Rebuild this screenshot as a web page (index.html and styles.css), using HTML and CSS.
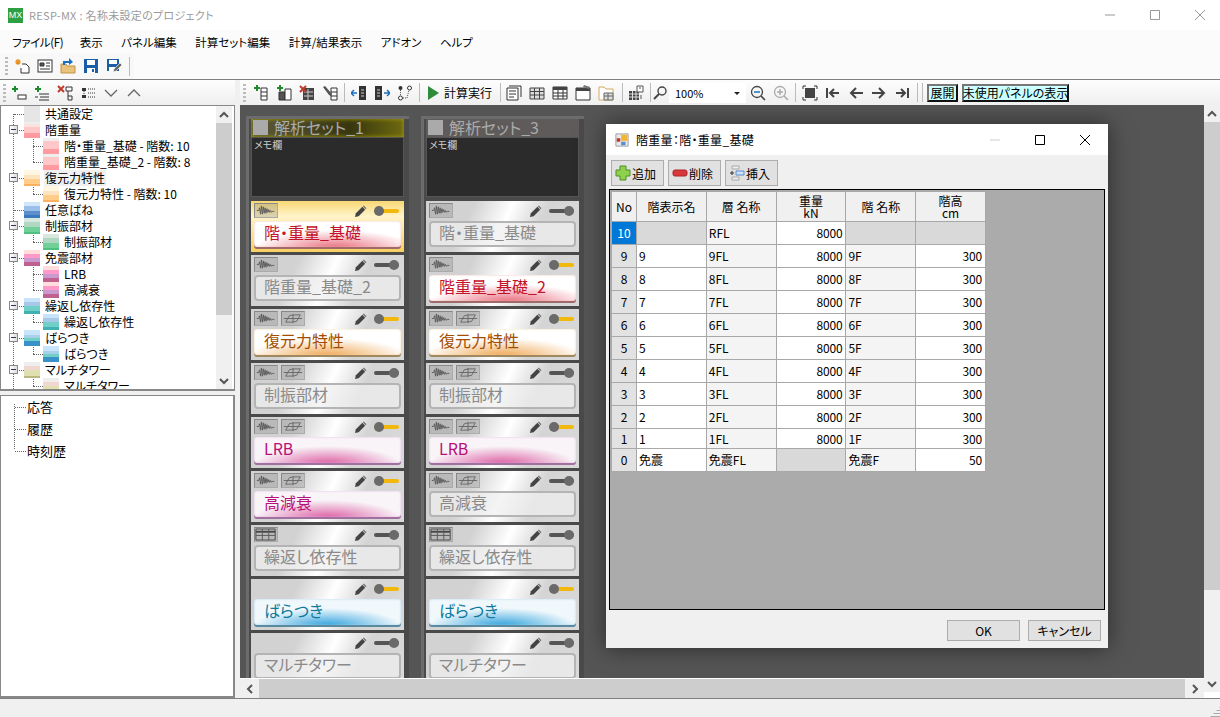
FILE: index.html
```html
<!DOCTYPE html>
<html lang="ja">
<head>
  <meta charset="UTF-8" />
  <title>RESP-MX</title>
  <link rel="stylesheet" href="styles.css">
</head>
<body>

<svg class="defs" width="0" height="0">
  <symbol id="i-new" viewBox="0 0 16 16"><path d="M4 1v6M1 4h6M2 2l4 4M6 2L2 6" stroke="#e8901c" stroke-width="1.2"/><path d="M8 6h4l3 3v6H7v-5" fill="#fff" stroke="#333"/></symbol>
  <symbol id="i-form" viewBox="0 0 16 16"><rect x="1" y="2" width="14" height="12" fill="#fff" stroke="#333"/><path d="M3 5h4v3H3zM9 5h4M9 8h4M3 11h10" fill="#555" stroke="#333"/></symbol>
  <symbol id="i-open" viewBox="0 0 16 16"><path d="M1 6h5l1 2h8v7H1z" fill="#e9c27e" stroke="#c49245"/><path d="M4 7V4h6" fill="none" stroke="#1c6fc0" stroke-width="2"/><path d="M9 0l4 4-4 3z" fill="#1c6fc0"/></symbol>
  <symbol id="i-save" viewBox="0 0 16 16"><path d="M1 1h14v14H1z" fill="#1b5da6"/><path d="M4 2h8v5H4z" fill="#fff"/><path d="M4 10h8v5H4z" fill="#fff"/><path d="M9 11h2v3H9z" fill="#1b5da6"/></symbol>
  <symbol id="i-saveas" viewBox="0 0 16 16"><path d="M1 1h12v12H1z" fill="#1b5da6"/><path d="M3 2h8v4H3zM3 9h6v4H3z" fill="#fff"/><path d="M7 14l1-3 6-6 2 2-6 6z" fill="#666" stroke="#fff" stroke-width=".6"/></symbol>
  <symbol id="i-addnode" viewBox="0 0 16 16"><path d="M4 1v6M1 4h6" stroke="#1f8a2c" stroke-width="2"/><rect x="7" y="10" width="8" height="4" fill="#fff" stroke="#333"/></symbol>
  <symbol id="i-addchild" viewBox="0 0 16 16"><path d="M4 1v6M1 4h6" stroke="#1f8a2c" stroke-width="2"/><path d="M5 9h10M1 12h3M6 12h9M5 15h10" stroke="#333"/></symbol>
  <symbol id="i-delnode" viewBox="0 0 16 16"><path d="M1 1l6 6M7 1L1 7" stroke="#c0392b" stroke-width="2"/><path d="M9 2h6v4H9zM11 6v9h4v-4h-4" fill="none" stroke="#333"/></symbol>
  <symbol id="i-dots" viewBox="0 0 16 16"><path d="M2 3h4v3H2zM2 10h4v3H2z" fill="#333"/><path d="M4 6v4M8 4h7M8 8h7M8 12h7" stroke="#333" stroke-dasharray="1 1"/></symbol>
  <symbol id="i-down" viewBox="0 0 16 16"><path d="M2 5l6 6 6-6" fill="none" stroke="#666" stroke-width="1.3"/></symbol>
  <symbol id="i-up" viewBox="0 0 16 16"><path d="M2 11l6-6 6 6" fill="none" stroke="#666" stroke-width="1.3"/></symbol>
  <symbol id="i-addcol" viewBox="0 0 16 16"><path d="M4 0v6M1 3h6" stroke="#1f8a2c" stroke-width="2"/><path d="M8 3h6v12H8zM8 7h6M8 11h6" fill="#fff" stroke="#333"/></symbol>
  <symbol id="i-copycol" viewBox="0 0 16 16"><path d="M4 0v6M1 3h6" stroke="#1f8a2c" stroke-width="2"/><path d="M3 7h6v8H3z" fill="#555" stroke="#333"/><path d="M9 4h6v11H9z" fill="#fff" stroke="#333"/></symbol>
  <symbol id="i-delcol" viewBox="0 0 16 16"><path d="M4 3h11v12H4z" fill="#444"/><path d="M5 7h9M5 11h9M9 4v11" stroke="#ccc"/><path d="M1 1l6 6M7 1L1 7" stroke="#c0392b" stroke-width="2"/></symbol>
  <symbol id="i-editcol" viewBox="0 0 16 16"><path d="M9 3h6v12H9zM9 7h6M9 11h6" fill="#fff" stroke="#333"/><path d="M1 2l2-1 7 8-1 2-2-1z" fill="#555"/></symbol>
  <symbol id="i-moveleft" viewBox="0 0 16 16"><path d="M8 1h7v14H8z" fill="#333"/><path d="M10 5h3M10 8h3M10 11h3" stroke="#ccc"/><path d="M0 8h6M3 5L0 8l3 3" fill="none" stroke="#1c6fc0" stroke-width="1.5"/></symbol>
  <symbol id="i-moveright" viewBox="0 0 16 16"><path d="M1 1h7v14H1z" fill="#333"/><path d="M3 5h3M3 8h3M3 11h3" stroke="#ccc"/><path d="M10 8h6M13 5l3 3-3 3" fill="none" stroke="#1c6fc0" stroke-width="1.5"/></symbol>
  <symbol id="i-link" viewBox="0 0 16 16"><circle cx="3.500" cy="3" r="2" fill="#333"/><circle cx="12.500" cy="3" r="2" fill="#fff" stroke="#333"/><circle cx="3.500" cy="13" r="2" fill="#fff" stroke="#333"/><path d="M3.500 5v6M6 13h4l2-8" fill="none" stroke="#555" stroke-dasharray="1 1"/></symbol>
  <symbol id="i-play" viewBox="0 0 16 16"><path d="M3 1l11 7-11 7z" fill="#2e8b3a"/></symbol>
  <symbol id="i-panel" viewBox="0 0 16 16"><path d="M3 1h12v11" fill="none" stroke="#333"/><path d="M1 3h11v12H1z" fill="#fff" stroke="#333"/><path d="M3 6h7M3 9h7M3 12h5" stroke="#333"/></symbol>
  <symbol id="i-table" viewBox="0 0 16 16"><path d="M1 3h14v11H1z" fill="#ddd" stroke="#444"/><path d="M1 6.500h14M1 10h14M5.500 3v11M10.500 3v11" stroke="#444"/></symbol>
  <symbol id="i-table2" viewBox="0 0 16 16"><path d="M1 2h14v12H1z" fill="#fff" stroke="#333"/><path d="M1 2h14v3H1z" fill="#444"/><path d="M1 8h14M1 11h14M6 5v9M11 5v9" stroke="#333"/></symbol>
  <symbol id="i-window" viewBox="0 0 16 16"><path d="M1 3h14v12H1z" fill="#fff" stroke="#333"/><path d="M1 3h14v3H1z" fill="#444"/><path d="M9 0l6 2-1 2-6-2z" fill="#777"/></symbol>
  <symbol id="i-folder" viewBox="0 0 16 16"><path d="M1 2h5l2 2h7v11H1z" fill="#fff" stroke="#d8a860"/><path d="M6 8h9v7H6zM6 11h9M10 8v7" fill="#ddd" stroke="#666"/></symbol>
  <symbol id="i-calc" viewBox="0 0 16 16"><path d="M1 6h10v9H1z" fill="#444"/><path d="M1 9h10M1 12h10M4.500 6v9M8 6v9" stroke="#ddd"/><path d="M9 1h6v6H9z" fill="#fff" stroke="#555"/><path d="M11 3h2M13 10v4" stroke="#555"/></symbol>
  <symbol id="i-zoomsel" viewBox="0 0 16 16"><circle cx="10" cy="6" r="4" fill="none" stroke="#444" stroke-width="1.4"/><path d="M7 9l-5 5" stroke="#444" stroke-width="2"/></symbol>
  <symbol id="i-zoomout" viewBox="0 0 16 16"><circle cx="7" cy="7" r="5.500" fill="none" stroke="#444" stroke-width="1.3"/><path d="M11 11l4 4" stroke="#444" stroke-width="1.6"/><path d="M4 7h6" stroke="#1c6fc0" stroke-width="1.5"/></symbol>
  <symbol id="i-zoomin" viewBox="0 0 16 16"><circle cx="7" cy="7" r="5.500" fill="none" stroke="#aaa" stroke-width="1.3"/><path d="M11 11l4 4" stroke="#aaa" stroke-width="1.6"/><path d="M4 7h6M7 4v6" stroke="#aaa" stroke-width="1.5"/></symbol>
  <symbol id="i-fit" viewBox="0 0 16 16"><rect x="3" y="3" width="10" height="10" fill="#444"/><path d="M1 4V1h3M12 1h3v3M15 12v3h-3M4 15H1v-3" fill="none" stroke="#333"/></symbol>
  <symbol id="i-first" viewBox="0 0 16 16"><path d="M2 3v10" stroke="#444" stroke-width="2"/><path d="M14 8H5M9 4L5 8l4 4" fill="none" stroke="#444" stroke-width="2"/></symbol>
  <symbol id="i-prev" viewBox="0 0 16 16"><path d="M15 8H3M8 3L3 8l5 5" fill="none" stroke="#444" stroke-width="2"/></symbol>
  <symbol id="i-next" viewBox="0 0 16 16"><path d="M1 8h12M8 3l5 5-5 5" fill="none" stroke="#444" stroke-width="2"/></symbol>
  <symbol id="i-last" viewBox="0 0 16 16"><path d="M14 3v10" stroke="#444" stroke-width="2"/><path d="M2 8h9M7 4l4 4-4 4" fill="none" stroke="#444" stroke-width="2"/></symbol>
  <symbol id="i-wave" viewBox="0 0 24 14"><path d="M2 7h2l1-3 1 7 1-9 1 9 1-8 1 7 1-6 1 6 1-5 1 4 1-3 1 3 1-2 1 2 1-1h2" fill="none" stroke="#5a5a5a"/></symbol>
  <symbol id="i-hyst" viewBox="0 0 24 14"><path d="M4 11l4-7c3-1 8-1 12-1l-4 7c-3 1-8 1-12 1zM2 7h20M12 2v10" fill="none" stroke="#666"/></symbol>
  <symbol id="i-grid" viewBox="0 0 24 14"><path d="M1 1h21v12H1z" fill="none" stroke="#444"/><path d="M1 4h21" stroke="#444" stroke-width="2"/><path d="M1 8h21M8 1v12M15 1v12" stroke="#555"/></symbol>
  <symbol id="i-pencil" viewBox="0 0 14 14"><path d="M1 13l1-4 7-7 3 3-7 7z" fill="#444"/><path d="M10 1l3 3" stroke="#777" stroke-width="1.5"/></symbol>
  <symbol id="i-appdlg" viewBox="0 0 16 16"><path d="M1 1h14v14H1z" fill="#e8e8e8" stroke="#999"/><path d="M7 2h7v7H7z" fill="#f2b632"/><path d="M2 6h4v4H2z" fill="#c0392b"/><path d="M7 10h5v4H7z" fill="#5b8bd0"/></symbol>
  <symbol id="i-plus" viewBox="0 0 16 16"><path d="M5 1h6v4h4v6h-4v4H5v-4H1V5h4z" fill="#8fd14f" stroke="#4d8f22"/></symbol>
  <symbol id="i-minus" viewBox="0 0 16 16"><rect x="1" y="5" width="14" height="6" rx="2" fill="#d8383a" stroke="#a82426"/></symbol>
  <symbol id="i-insert" viewBox="0 0 16 16"><path d="M3 1h7v3H3zM3 12h7v3H3z" fill="#eee" stroke="#aaa"/><path d="M7 6h8v4H7z" fill="#cfe0fa" stroke="#5b8bd0"/><path d="M1 8h4M3 6v4" stroke="#333"/></symbol>
  <symbol id="i-chev-up" viewBox="0 0 10 10"><path d="M1 7l4-4 4 4" fill="none" stroke="#555" stroke-width="2"/></symbol>
  <symbol id="i-chev-down" viewBox="0 0 10 10"><path d="M1 3l4 4 4-4" fill="none" stroke="#555" stroke-width="2"/></symbol>
  <symbol id="i-chev-left" viewBox="0 0 10 10"><path d="M7 1L3 5l4 4" fill="none" stroke="#555" stroke-width="2"/></symbol>
  <symbol id="i-chev-right" viewBox="0 0 10 10"><path d="M3 1l4 4-4 4" fill="none" stroke="#555" stroke-width="2"/></symbol>
</svg>

<div class="titlebar">
  <span class="applogo">MX</span>
  <span class="apptitle">RESP-MX : 名称未設定のプロジェクト</span>
  <span class="wbtns">
    <svg class="wb" viewBox="0 0 10 10"><path d="M0 5h10" stroke="#999"/></svg>
    <svg class="wb" viewBox="0 0 10 10"><path d="M.5.5h9v9h-9z" fill="none" stroke="#999"/></svg>
    <svg class="wb" viewBox="0 0 10 10"><path d="M0 0l10 10M10 0L0 10" stroke="#999"/></svg>
  </span>
</div>

<div class="menubar">
  <span>ファイル(F)</span><span>表示</span><span>パネル編集</span><span>計算セット編集</span><span>計算/結果表示</span><span>アドオン</span><span>ヘルプ</span>
</div>

<div class="filebar">
  <div class="filetools">
    <i class="grip"></i>
    <span class="tb"><svg><use href="#i-new"/></svg></span>
    <span class="tb"><svg><use href="#i-form"/></svg></span>
    <span class="tb"><svg><use href="#i-open"/></svg></span>
    <span class="tb"><svg><use href="#i-save"/></svg></span>
    <span class="tb"><svg><use href="#i-saveas"/></svg></span>
    <i class="sep"></i>
  </div>
</div>

<div class="work">
  <div class="left">
    <div class="toolbar lefttools">
      <i class="grip"></i>
      <span class="tb"><svg><use href="#i-addnode"/></svg></span>
      <span class="tb"><svg><use href="#i-addchild"/></svg></span>
      <span class="tb"><svg><use href="#i-delnode"/></svg></span>
      <span class="tb"><svg><use href="#i-dots"/></svg></span>
      <span class="tb"><svg><use href="#i-down"/></svg></span>
      <span class="tb"><svg><use href="#i-up"/></svg></span>
    </div>

    <div class="treebox">
      <div class="tree">
        <div class="node"><i class="sw gray"></i>共通設定</div>
        <div class="node"><b class="exp"></b><i class="sw pink"></i>階重量</div>
        <div class="node sub"><i class="sw pink2"></i>階・重量_基礎 - 階数: 10</div>
        <div class="node sub"><i class="sw pink2"></i>階重量_基礎_2 - 階数: 8</div>
        <div class="node"><b class="exp"></b><i class="sw orange"></i><span class="hilite">復元力特性</span></div>
        <div class="node sub"><i class="sw orange"></i>復元力特性 - 階数: 10</div>
        <div class="node"><i class="sw blue"></i>任意ばね</div>
        <div class="node"><b class="exp"></b><i class="sw green"></i>制振部材</div>
        <div class="node sub"><i class="sw green"></i>制振部材</div>
        <div class="node"><b class="exp"></b><i class="sw magenta"></i>免震部材</div>
        <div class="node sub"><i class="sw magenta"></i>LRB</div>
        <div class="node sub"><i class="sw magenta"></i>高減衰</div>
        <div class="node"><b class="exp"></b><i class="sw teal"></i>繰返し依存性</div>
        <div class="node sub"><i class="sw teal"></i>繰返し依存性</div>
        <div class="node"><b class="exp"></b><i class="sw sky"></i>ばらつき</div>
        <div class="node sub"><i class="sw sky"></i>ばらつき</div>
        <div class="node"><b class="exp"></b><i class="sw khaki"></i>マルチタワー</div>
        <div class="node sub"><i class="sw khaki"></i>マルチタワー</div>
      </div>
      <div class="vscroll small">
        <span class="sbtn"><svg><use href="#i-chev-up"/></svg></span>
        <span class="thumb"></span>
        <span class="sbtn end"><svg><use href="#i-chev-down"/></svg></span>
      </div>
    </div>

    <div class="resultbox">
      <div class="res">応答</div>
      <div class="res">履歴</div>
      <div class="res">時刻歴</div>
    </div>
  </div>

  <div class="right">
    <div class="toolbar maintools">
      <i class="grip"></i>
      <span class="tb"><svg><use href="#i-addcol"/></svg></span>
      <span class="tb"><svg><use href="#i-copycol"/></svg></span>
      <span class="tb"><svg><use href="#i-delcol"/></svg></span>
      <span class="tb"><svg><use href="#i-editcol"/></svg></span>
      <i class="sep s32"></i>
      <span class="tb"><svg><use href="#i-moveleft"/></svg></span>
      <span class="tb"><svg><use href="#i-moveright"/></svg></span>
      <span class="tb"><svg><use href="#i-link"/></svg></span>
      <i class="sep s31"></i>
      <span class="tb"><svg><use href="#i-play"/></svg></span>
      <span class="runlabel">計算実行</span>
      <i class="sep s81"></i>
      <span class="tb"><svg><use href="#i-panel"/></svg></span>
      <span class="tb"><svg><use href="#i-table"/></svg></span>
      <span class="tb"><svg><use href="#i-table2"/></svg></span>
      <span class="tb"><svg><use href="#i-window"/></svg></span>
      <span class="tb"><svg><use href="#i-folder"/></svg></span>
      <i class="sep s51"></i>
      <span class="tb"><svg><use href="#i-calc"/></svg></span>
      <i class="sep s30"></i>
      <span class="tb narrow"><svg><use href="#i-zoomsel"/></svg></span>
      <span class="combo">100%<i class="caret"></i></span>
      <span class="tb"><svg><use href="#i-zoomout"/></svg></span>
      <span class="tb"><svg><use href="#i-zoomin"/></svg></span>
      <i class="sep s32"></i>
      <span class="tb"><svg><use href="#i-fit"/></svg></span>
      <span class="tb"><svg><use href="#i-first"/></svg></span>
      <span class="tb"><svg><use href="#i-prev"/></svg></span>
      <span class="tb"><svg><use href="#i-next"/></svg></span>
      <span class="tb"><svg><use href="#i-last"/></svg></span>
      <i class="sep s44"></i>
      <i class="sep s04"></i>
      <span class="cyanbtn">展開</span>
      <span class="cyanbtn wide">未使用パネルの表示</span>
    </div>

    <div class="mainrow">
      <div class="mainleft">
        <div class="canvas">
          <section class="setcol">
            <div class="sethead on"><i class="chk"></i>解析セット_1</div>
            <div class="memo">メモ欄</div>
            <div class="card selected">
              <div class="cardtop"><svg class="ci"><use href="#i-wave"/></svg><span class="tools"><svg class="pen"><use href="#i-pencil"/></svg><i class="toggle on"></i></span></div>
              <div class="lbl red">階・重量_基礎</div>
            </div>
            <div class="card">
              <div class="cardtop"><svg class="ci"><use href="#i-wave"/></svg><span class="tools"><svg class="pen"><use href="#i-pencil"/></svg><i class="toggle"></i></span></div>
              <div class="lbl">階重量_基礎_2</div>
            </div>
            <div class="card">
              <div class="cardtop"><svg class="ci"><use href="#i-wave"/></svg><svg class="ci"><use href="#i-hyst"/></svg><span class="tools"><svg class="pen"><use href="#i-pencil"/></svg><i class="toggle on"></i></span></div>
              <div class="lbl orange">復元力特性</div>
            </div>
            <div class="card">
              <div class="cardtop"><svg class="ci"><use href="#i-wave"/></svg><svg class="ci"><use href="#i-hyst"/></svg><span class="tools"><svg class="pen"><use href="#i-pencil"/></svg><i class="toggle"></i></span></div>
              <div class="lbl">制振部材</div>
            </div>
            <div class="card">
              <div class="cardtop"><svg class="ci"><use href="#i-wave"/></svg><svg class="ci"><use href="#i-hyst"/></svg><span class="tools"><svg class="pen"><use href="#i-pencil"/></svg><i class="toggle on"></i></span></div>
              <div class="lbl magenta">LRB</div>
            </div>
            <div class="card">
              <div class="cardtop"><svg class="ci"><use href="#i-wave"/></svg><svg class="ci"><use href="#i-hyst"/></svg><span class="tools"><svg class="pen"><use href="#i-pencil"/></svg><i class="toggle on"></i></span></div>
              <div class="lbl magenta">高減衰</div>
            </div>
            <div class="card">
              <div class="cardtop"><svg class="ci"><use href="#i-grid"/></svg><span class="tools"><svg class="pen"><use href="#i-pencil"/></svg><i class="toggle"></i></span></div>
              <div class="lbl">繰返し依存性</div>
            </div>
            <div class="card">
              <div class="cardtop"><span class="tools"><svg class="pen"><use href="#i-pencil"/></svg><i class="toggle on"></i></span></div>
              <div class="lbl sky">ばらつき</div>
            </div>
            <div class="card">
              <div class="cardtop"><span class="tools"><svg class="pen"><use href="#i-pencil"/></svg><i class="toggle"></i></span></div>
              <div class="lbl">マルチタワー</div>
            </div>
          </section>

          <section class="setcol">
            <div class="sethead"><i class="chk"></i>解析セット_3</div>
            <div class="memo">メモ欄</div>
            <div class="card">
              <div class="cardtop"><svg class="ci"><use href="#i-wave"/></svg><span class="tools"><svg class="pen"><use href="#i-pencil"/></svg><i class="toggle"></i></span></div>
              <div class="lbl">階・重量_基礎</div>
            </div>
            <div class="card">
              <div class="cardtop"><svg class="ci"><use href="#i-wave"/></svg><span class="tools"><svg class="pen"><use href="#i-pencil"/></svg><i class="toggle on"></i></span></div>
              <div class="lbl red">階重量_基礎_2</div>
            </div>
            <div class="card">
              <div class="cardtop"><svg class="ci"><use href="#i-wave"/></svg><svg class="ci"><use href="#i-hyst"/></svg><span class="tools"><svg class="pen"><use href="#i-pencil"/></svg><i class="toggle on"></i></span></div>
              <div class="lbl orange">復元力特性</div>
            </div>
            <div class="card">
              <div class="cardtop"><svg class="ci"><use href="#i-wave"/></svg><svg class="ci"><use href="#i-hyst"/></svg><span class="tools"><svg class="pen"><use href="#i-pencil"/></svg><i class="toggle"></i></span></div>
              <div class="lbl">制振部材</div>
            </div>
            <div class="card">
              <div class="cardtop"><svg class="ci"><use href="#i-wave"/></svg><svg class="ci"><use href="#i-hyst"/></svg><span class="tools"><svg class="pen"><use href="#i-pencil"/></svg><i class="toggle on"></i></span></div>
              <div class="lbl magenta">LRB</div>
            </div>
            <div class="card">
              <div class="cardtop"><svg class="ci"><use href="#i-wave"/></svg><svg class="ci"><use href="#i-hyst"/></svg><span class="tools"><svg class="pen"><use href="#i-pencil"/></svg><i class="toggle"></i></span></div>
              <div class="lbl">高減衰</div>
            </div>
            <div class="card">
              <div class="cardtop"><svg class="ci"><use href="#i-grid"/></svg><span class="tools"><svg class="pen"><use href="#i-pencil"/></svg><i class="toggle"></i></span></div>
              <div class="lbl">繰返し依存性</div>
            </div>
            <div class="card">
              <div class="cardtop"><span class="tools"><svg class="pen"><use href="#i-pencil"/></svg><i class="toggle on"></i></span></div>
              <div class="lbl sky">ばらつき</div>
            </div>
            <div class="card">
              <div class="cardtop"><span class="tools"><svg class="pen"><use href="#i-pencil"/></svg><i class="toggle"></i></span></div>
              <div class="lbl">マルチタワー</div>
            </div>
          </section>

          <div class="dialog">
            <div class="dlgtitle">
              <svg class="dlgicon"><use href="#i-appdlg"/></svg>
              <span class="dlgname">階重量：階・重量_基礎</span>
              <span class="dlgbtns">
                <svg class="wb" viewBox="0 0 10 10"><path d="M0 5h10" stroke="#ccc"/></svg>
                <svg class="wb" viewBox="0 0 10 10"><path d="M.5.5h9v9h-9z" fill="none" stroke="#000"/></svg>
                <svg class="wb" viewBox="0 0 10 10"><path d="M0 0l10 10M10 0L0 10" stroke="#000"/></svg>
              </span>
            </div>
            <div class="dlgtools">
              <span class="dbtn"><svg><use href="#i-plus"/></svg>追加</span>
              <span class="dbtn"><svg><use href="#i-minus"/></svg>削除</span>
              <span class="dbtn"><svg><use href="#i-insert"/></svg>挿入</span>
            </div>
            <div class="gridwrap">
              <table class="grid">
                <thead>
                  <tr><th>No</th><th>階表示名</th><th>層 名称</th><th>重量<br>kN</th><th>階 名称</th><th>階高<br>cm</th></tr>
                </thead>
                <tbody>
                  <tr><td class="rh cur">10</td><td class="off"></td><td class="alt">RFL</td><td class="num">8000</td><td class="off"></td><td class="off"></td></tr>
                  <tr><td class="rh">9</td><td>9</td><td class="alt">9FL</td><td class="num">8000</td><td class="alt">9F</td><td class="num">300</td></tr>
                  <tr><td class="rh">8</td><td>8</td><td class="alt">8FL</td><td class="num">8000</td><td class="alt">8F</td><td class="num">300</td></tr>
                  <tr><td class="rh">7</td><td>7</td><td class="alt">7FL</td><td class="num">8000</td><td class="alt">7F</td><td class="num">300</td></tr>
                  <tr><td class="rh">6</td><td>6</td><td class="alt">6FL</td><td class="num">8000</td><td class="alt">6F</td><td class="num">300</td></tr>
                  <tr><td class="rh">5</td><td>5</td><td class="alt">5FL</td><td class="num">8000</td><td class="alt">5F</td><td class="num">300</td></tr>
                  <tr><td class="rh">4</td><td>4</td><td class="alt">4FL</td><td class="num">8000</td><td class="alt">4F</td><td class="num">300</td></tr>
                  <tr><td class="rh">3</td><td>3</td><td class="alt">3FL</td><td class="num">8000</td><td class="alt">3F</td><td class="num">300</td></tr>
                  <tr><td class="rh">2</td><td>2</td><td class="alt">2FL</td><td class="num">8000</td><td class="alt">2F</td><td class="num">300</td></tr>
                  <tr class="short"><td class="rh">1</td><td>1</td><td class="alt">1FL</td><td class="num">8000</td><td class="alt">1F</td><td class="num">300</td></tr>
                  <tr><td class="rh">0</td><td>免震</td><td class="alt">免震FL</td><td class="off"></td><td class="alt">免震F</td><td class="num">50</td></tr>
                </tbody>
              </table>
            </div>
            <div class="dlgfoot">
              <span class="okbtn">OK</span>
              <span class="okbtn">キャンセル</span>
            </div>
          </div>
        </div>
        <div class="hscroll">
          <span class="sbtn"><svg><use href="#i-chev-left"/></svg></span>
          <span class="thumb"></span>
          <span class="sbtn"><svg><use href="#i-chev-right"/></svg></span>
        </div>
      </div>
      <div class="vscroll main">
        <span class="sbtn"><svg><use href="#i-chev-up"/></svg></span>
        <span class="thumb"></span>
        <span class="sbtn end"><svg><use href="#i-chev-down"/></svg></span>
      </div>
    </div>
  </div>
</div>

<div class="statusbar"></div>

</body>
</html>
```

FILE: styles.css
```css
* { box-sizing: border-box; }
html, body { margin: 0; height: 717px; overflow: hidden; }
body {
  width: 1220px;
  display: flex;
  flex-direction: column;
  background: #f0f0f0;
  font-family: "Noto Sans CJK JP", "Noto Sans", sans-serif;
  font-size: 12px;
  color: #000;
  font-feature-settings: "palt";
}
i, b { display: block; font-style: normal; }
svg { display: block; }
.defs { position: absolute; }

/* title + menu */
.titlebar { height: 30px; background: #fff; display: flex; align-items: center; padding-left: 8px; }
.applogo {
  width: 15px; height: 15px; background: #2ea043; color: #fff;
  font: 9px/15px "Liberation Sans", sans-serif; text-align: center;
}
.apptitle { margin-left: 6px; color: #9a9a9a; font-size: 11px; letter-spacing: .3px; }
.wbtns { margin-left: auto; display: flex; gap: 35px; padding-right: 15px; }
.wb { width: 10px; height: 10px; }
.menubar { height: 23px; background: #fbfbfb; display: flex; align-items: center; gap: 18.500px; padding-left: 12px; font-size: 11.500px; }
.menubar span:first-child { margin-right: -2px; letter-spacing: -.4px; }
.filebar { height: 27px; background: #fbfbfb; border-bottom: 1px solid #808080; }
.filetools { width: 134px; height: 26px; display: flex; align-items: center; padding-left: 5px; background: #f8f8f8; border-radius: 0 4px 4px 0; }
.filetools .grip { margin-right: 2.500px; }

/* toolbars */
.toolbar { height: 25px; display: flex; align-items: center; background: linear-gradient(#fdfdfd, #efefef); }
.grip { width: 3px; height: 18px; background: repeating-linear-gradient(#bbb 0 2px, transparent 2px 4px); flex: none; }
.tb { width: 23px; height: 18px; flex: none; display: flex; align-items: center; justify-content: center; }
.tb svg { width: 16px; height: 16px; }
.tb.narrow { width: 18px; }
.sep { width: 1px; height: 19px; background: #bbb; flex: none; margin: 0 3px; }
.s32 { margin: 0 2px 0 3px; }
.s31 { margin: 0 1px 0 3px; }
.s81 { margin: 0 1px 0 8px; }
.s51 { margin: 0 1px 0 5px; }
.s30 { margin: 0 0 0 3px; }
.s44 { margin: 0 4px; }
.s04 { margin: 0 4px 0 0; }
.lefttools { padding-left: 3px; }
.lefttools .grip { margin-right: 1.500px; }
.maintools { padding-left: 3px; }
.maintools .grip { margin-right: 3px; }
.runlabel { width: 48px; flex: none; white-space: nowrap; }
.combo { width: 77px; height: 20px; flex: none; background: #fff; display: flex; align-items: center; padding-left: 6px; position: relative; font-size: 11px; }
.caret { position: absolute; right: 6px; top: 9px; border: 3px solid transparent; border-top: 3px solid #222; border-bottom: 0; }
.cyanbtn {
  width: 31px; height: 18px; flex: none; background: #ccffff;
  border: 2px solid; border-color: #777 #111 #111 #777;
  display: flex; align-items: center; justify-content: center; margin-right: 4px;
}
.cyanbtn.wide { width: 107px; white-space: nowrap; }

/* layout */
.work { height: 619px; display: flex; border-bottom: 1px solid #808080; }
.left { width: 235px; display: flex; flex-direction: column; }
.right { width: 980px; margin-left: 5px; display: flex; flex-direction: column; }

/* trees */
.treebox { height: 286px; background: #fff; border: 1px solid #888; border-width: 1px 1px 2px 1px; display: flex; justify-content: space-between; margin-bottom: 4px; }
.tree { position: relative; flex: 1; overflow: hidden; }
.tree::before { content: ""; position: absolute; left: 12px; top: 8px; bottom: 0; border-left: 1px dotted #666; }
.node { height: 16px; line-height: 16px; position: relative; display: flex; align-items: center; padding-left: 23px; white-space: nowrap; }
.node::before { content: ""; position: absolute; left: 13px; top: 8px; width: 10px; border-top: 1px dotted #666; }
.node.sub { padding-left: 42px; }
.node.sub::before { left: 32px; }
.node.sub::after { content: ""; position: absolute; left: 32px; top: -8px; height: 16px; border-left: 1px dotted #666; }
.sw { width: 16px; height: 16px; flex: none; margin-right: 5px; position: relative; z-index: 1; }
.exp {
  position: absolute; left: 8px; top: 3px; width: 9px; height: 9px; z-index: 1;
  border: 1px solid #888; background: linear-gradient(90deg, #fff, #ddd);
}
.exp::after { content: ""; position: absolute; left: 1px; top: 3px; width: 5px; height: 1px; background: #335; }
.hilite { background: #f0f0f0; margin-left: -1px; padding: 0 1px; }
.gray { background: #e6e6e6; }
.pink { background: linear-gradient(#eee 0 15%, #fde3df 15% 30%, #ffc8c8 30% 70%, #ff9aa0 70%); }
.pink2 { background: linear-gradient(#eee 0 20%, #ffc8c8 20% 70%, #ff9aa0 70%); }
.orange { background: linear-gradient(#fdf6e0 0 30%, #fde3c0 30% 55%, #ffcc8a 55% 85%, #ffb060 85%); }
.blue { background: linear-gradient(#cfe6fb 0 25%, #9bbfe8 25% 55%, #5b8fcc 55% 80%, #3a78c0 80%); }
.green { background: linear-gradient(#d8e8e0 0 25%, #b0d8c0 25% 55%, #70d098 55% 85%, #50c080 85%); }
.magenta { background: linear-gradient(#fdd 0 25%, #ff9ac8 25% 50%, #c89ad0 50% 75%, #c0608e 75%); }
.teal { background: linear-gradient(#c8e4fa 0 25%, #a8c8e8 25% 50%, #70d0c8 50% 80%, #40b0b0 80%); }
.sky { background: linear-gradient(#c8e4fa 0 30%, #a8d0e8 30% 50%, #70d0c8 50% 70%, #3a90c8 70%); }
.khaki { background: linear-gradient(#eee 0 25%, #f0d8d0 25% 50%, #e0e0b0 50% 85%, #b8b880 85%); }
.resultbox { flex: 1; background: #fff; border: 1px solid #888; border-width: 1px 2px 2px 1px; position: relative; font-size: 13px; }
.resultbox::before { content: ""; position: absolute; left: 13px; top: 8px; height: 45px; border-left: 1px dotted #666; }
.res { height: 22px; line-height: 22px; padding-left: 26px; position: relative; }
.res::before { content: ""; position: absolute; left: 14px; top: 11px; width: 11px; border-top: 1px dotted #666; }

/* scrollbars */
.vscroll { width: 16px; background: #f0f0f0; display: flex; flex-direction: column; }
.vscroll .thumb { height: 468px; background: #cdcdcd; }
.vscroll.main { border-bottom: 6px solid #fff; }
.vscroll.small { width: 16px; margin-right: 2px; flex: none; }
.vscroll.small .thumb { height: 192px; }
.sbtn { height: 17px; flex: none; display: flex; align-items: center; justify-content: center; }
.sbtn svg { width: 10px; height: 10px; }
.sbtn.end { margin-top: auto; }
.hscroll { height: 20px; background: #f0f0f0; display: flex; border-top: 1px solid #fff; }
.hscroll .sbtn { width: 19px; height: 19px; }
.hscroll .thumb { flex: 1; background: #cdcdcd; }

/* canvas */
.mainrow { flex: 1; display: flex; min-height: 0; }
.mainleft { width: 964px; display: flex; flex-direction: column; }
.canvas { flex: 1; min-height: 0; background: #555; overflow: hidden; position: relative; display: flex; gap: 12px; padding: 11px 0 0 6px; }
.setcol { width: 163px; flex: none; background: #4a4a4a; border-left: 3px solid #6c6c6c; border-top: 3px solid #6c6c6c; padding: 0 5px 0 2px; }
.sethead { height: 18px; display: flex; align-items: center; background: #5f5b5b; color: #aaa; font-size: 16px; padding: 0 0 2px 2px; white-space: nowrap; }
.sethead.on { background: linear-gradient(90deg, #5c5a3a, #38360f 65%, #6e6a10); box-shadow: inset 0 0 4px #a8a000; }
.chk { width: 15px; height: 15px; background: #aaa; margin-right: 6px; }
.memo { height: 60px; background: #2b2b2b; border: 1px solid #555; color: #ccc; font-size: 10px; line-height: 14px; padding-left: 2px; margin-bottom: 4px; }
.card {
  height: 51px; margin-bottom: 3px; padding: 2px 3px;
  background: linear-gradient(115deg, #d2d2d2 0 28%, #fff 50%, #d4d4d4 70%, #dadada);
}
.card.selected { background: linear-gradient(#f8d874, #fff3c8 30%, #f7d060); }
.cardtop { height: 16px; display: flex; gap: 3px; }
.ci { width: 24px; height: 15px; background: rgba(110,110,110,.25); border: 1px solid; border-color: #888 #aaa #aaa #888; }
.tools { margin-left: auto; display: flex; align-items: center; gap: 7px; margin-right: 2px; }
.pen { width: 13px; height: 13px; }
.toggle { width: 25px; height: 10px; position: relative; }
.toggle::before { content: ""; position: absolute; left: 0; right: 0; top: 3px; height: 4px; border-radius: 2px; background: #555; }
.toggle::after { content: ""; position: absolute; right: 0; top: 0; width: 10px; height: 10px; border-radius: 50%; background: #6a6a6a; }
.toggle.on::before { background: #f2b90c; }
.toggle.on::after { right: auto; left: 0; }
.lbl {
  height: 26px; margin-top: 2px; padding-left: 8px; font-size: 16px; line-height: 19px; color: #8a8a8a;
  border: 2px solid #b4b4b4; border-radius: 4px; background: rgba(240,240,240,.7);
}
.lbl.red, .lbl.orange, .lbl.magenta, .lbl.sky { border: 0; border-radius: 3px; padding-left: 10px; line-height: 23px; }
.lbl.red { color: #c4122a; background: radial-gradient(ellipse 55% 70% at 55% 105%, #e86a7a, transparent), #fff; box-shadow: 0 2px 0 #a06a6a, inset 0 0 2px #f0b0b0; }
.lbl.orange { color: #a34d00; background: radial-gradient(ellipse 55% 70% at 50% 105%, #efa550, transparent), #fff; box-shadow: 0 2px 0 #a08860, inset 0 0 2px #f0d090; }
.lbl.magenta { color: #b8107a; background: radial-gradient(ellipse 50% 70% at 50% 105%, #dc5aa0, transparent), #f8f4f8; box-shadow: 0 2px 0 #a070a0, inset 0 0 2px #e0b0e0; }
.lbl.sky { color: #0f7a9c; background: radial-gradient(ellipse 50% 70% at 50% 105%, #2a9fdc, transparent), #f0f8fc; box-shadow: 0 2px 0 #5a8aa0, inset 0 0 2px #a0d0e8; }

/* dialog */
.dialog {
  position: absolute; left: 366px; top: 19px; width: 502px; height: 524px;
  background: #f0f0f0; box-shadow: 0 0 22px rgba(0,0,0,.5); display: flex; flex-direction: column;
}
.dlgtitle { height: 31px; flex: none; background: #fff; display: flex; align-items: center; padding-left: 9px; }
.dlgicon { width: 14px; height: 14px; }
.dlgname { margin-left: 7px; letter-spacing: .3px; }
.dlgbtns { margin-left: auto; display: flex; gap: 35px; padding-right: 18px; }
.dlgtools { display: flex; gap: 4px; padding: 5px 0 0 5px; height: 34px; flex: none; }
.dbtn { height: 26px; width: 53px; display: flex; align-items: center; gap: 1px; padding-left: 3px; background: #e1e1e1; border: 1px solid #adadad; white-space: nowrap; }
.dbtn svg { width: 16px; height: 16px; flex: none; }
.gridwrap { margin: 0 3px; height: 421px; flex: none; background: #ababab; border: 1px solid #000; padding: 1px; }
.grid { border-collapse: collapse; table-layout: fixed; width: 375px; background: #fff; }
.grid th, .grid td { border: 1px solid #a8a8a8; padding: 0 2px; height: 23px; overflow: hidden; white-space: nowrap; font-size: 12px; line-height: 12px; }
.grid th { height: 30px; background: #f0f0f0; font-weight: 400; text-align: center; }
.grid th:first-child, .rh { width: 25px; }
.grid .rh { background: #e2e2e2; text-align: center; }
.grid .rh.cur { background: #0078d7; color: #fff; }
.grid .alt { background: #f4f4f4; }
.grid .off { background: #d9d9d9; }
.grid .num { text-align: right; letter-spacing: -.2px; padding-right: 3px; }
.grid .short td { height: 20px; }
.dlgfoot { display: flex; justify-content: flex-end; gap: 8px; padding: 10px 7px 0 0; }
.okbtn { width: 73px; height: 21px; background: #e1e1e1; border: 1px solid #adadad; text-align: center; line-height: 19px; }

.statusbar { flex: 1; background: #f0f0f0; position: relative; }
.statusbar::after {
  content: ""; position: absolute; right: 0; bottom: 0; width: 10px; height: 10px;
  background: repeating-linear-gradient(#aaa 0 1px, transparent 1px 3px);
  clip-path: polygon(100% 0, 100% 100%, 0 100%);
}
```
